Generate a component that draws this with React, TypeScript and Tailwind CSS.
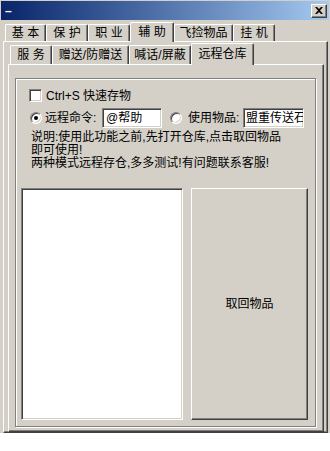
import clsx from "clsx";

const font = "font-['Liberation_Sans','Noto_Sans_CJK_SC',sans-serif]";

const raised =
  "border border-t-white border-l-white border-r-[#404040] border-b-[#404040] shadow-[inset_-1px_-1px_0_#808080]";
const sunken =
  "border border-t-[#808080] border-l-[#808080] border-r-white border-b-white shadow-[inset_1px_1px_0_#404040,inset_-1px_-1px_0_#d4d0c8]";

type TabDef = { label: string; w: string; active?: boolean };

const mainTabs: TabDef[] = [
  { label: "基 本", w: "w-[41px]" },
  { label: "保 护", w: "w-[42px]" },
  { label: "职 业", w: "w-[42px]" },
  { label: "辅 助", w: "w-[44px]", active: true },
  { label: "飞捡物品", w: "w-[59px]" },
  { label: "挂 机", w: "w-[42px]" },
];

const subTabs: TabDef[] = [
  { label: "服 务", w: "w-[42px]" },
  { label: "赠送/防赠送", w: "w-[77px]" },
  { label: "喊话/屏蔽", w: "w-[62px]" },
  { label: "远程仓库", w: "w-[63px]", active: true },
];

function Tab({ tab, h, hActive }: { tab: TabDef; h: string; hActive: string }) {
  return (
    <div
      className={clsx(
        "relative flex items-center justify-center bg-[#d4d0c8] border-t border-l border-r border-t-white border-l-white border-r-[#404040] rounded-t-[2px] shadow-[inset_-1px_0_0_#808080] text-[12px] leading-[12px] text-black whitespace-nowrap",
        tab.w,
        tab.active ? clsx("z-10 -mb-px pb-[2px]", hActive) : h
      )}
    >
      {tab.label}
    </div>
  );
}

function Radio({ checked }: { checked?: boolean }) {
  return (
    <div className="w-[12px] h-[12px] rounded-full bg-white border border-t-[#808080] border-l-[#808080] border-r-white border-b-white shadow-[inset_1px_1px_0_#404040,inset_-1px_-1px_0_#d4d0c8] flex items-center justify-center shrink-0">
      {checked && <div className="w-[4px] h-[4px] rounded-full bg-black" />}
    </div>
  );
}

export default function App() {
  return (
    <div className={clsx("w-[330px] h-[451px] bg-white", font)}>
      <div className="w-[330px] h-[433px] bg-[#d4d0c8] pt-px pl-px pr-px flex flex-col">
        {/* Title bar */}
        <div className="h-[19px] flex items-center justify-between bg-gradient-to-r from-[#0a246a] to-[#a6caf0] pl-[4px] pr-[2px]">
          <span className="text-white text-[12px] font-bold leading-none">–</span>
          <div className={clsx("w-[16px] h-[14px] bg-[#d4d0c8] flex items-center justify-center", raised)}>
            <svg width="8" height="7" viewBox="0 0 8 7">
              <path d="M0 0h2l2 2 2-2h2L5 3.5 8 7H6L4 5 2 7H0l3-3.5z" fill="#000" />
            </svg>
          </div>
        </div>

        {/* Main tab control */}
        <div className="mt-[2px] ml-[2px] w-[325px] flex-1 flex flex-col">
          <div className="h-[19px] flex items-end pl-[2px]">
            {mainTabs.map((t) => (
              <Tab key={t.label} tab={t} h="h-[17px]" hActive="h-[20px]" />
            ))}
          </div>
          <div className="flex-1 flex flex-col border border-t-white border-l-white border-r-[#404040] border-b-[#404040] shadow-[inset_-1px_-1px_0_#808080] pt-px pl-[4px]">
            {/* Sub tab control */}
            <div className="w-[316px] flex-1 flex flex-col">
              <div className="h-[21px] flex items-end pl-[2px]">
                {subTabs.map((t) => (
                  <Tab key={t.label} tab={t} h="h-[19px]" hActive="h-[22px]" />
                ))}
              </div>
              <div className="flex-1 border border-t-white border-l-white border-r-[#404040] border-b-[#404040] shadow-[inset_-1px_-1px_0_#808080] pt-[13px] pl-[6px]">
                {/* Group box */}
                <div className="w-[301px] h-[349px] border border-[#808080] shadow-[1px_1px_0_#fff,inset_1px_1px_0_#fff] pl-[13px] pt-[10px] text-[12px] leading-[12px] text-black flex flex-col">
                  <div className="flex items-center gap-[3px] h-[13px]">
                    <div className={clsx("w-[13px] h-[13px] bg-white shrink-0", sunken)} />
                    <span className="ml-px">Ctrl+S 快速存物</span>
                  </div>

                  <div className="mt-[6px] flex items-center h-[20px]">
                    <div className="ml-px">
                      <Radio checked />
                    </div>
                    <span className="ml-[3px] w-[57px]">远程命令:</span>
                    <div className={clsx("w-[60px] h-[20px] bg-white flex items-center pl-[3px] overflow-hidden", sunken)}>
                      @帮助
                    </div>
                    <div className="ml-[8px]">
                      <Radio />
                    </div>
                    <span className="ml-[6px] w-[55px]">使用物品:</span>
                    <div className={clsx("w-[61px] h-[20px] bg-white flex items-center pl-[2px] overflow-hidden whitespace-nowrap", sunken)}>
                      盟重传送石
                    </div>
                  </div>

                  <div className="mt-[3px] ml-[2px] flex flex-col leading-[13px]">
                    <div>说明:使用此功能之前,先打开仓库,点击取回物品</div>
                    <div>即可使用!</div>
                    <div>两种模式远程存仓,多多测试!有问题联系客服!</div>
                  </div>

                  <div className="mt-[18px] -ml-[8px] flex gap-[8px]">
                    <div className={clsx("w-[162px] h-[232px] bg-white", sunken)} />
                    <div className={clsx("w-[117px] h-[232px] bg-[#d4d0c8] flex items-center justify-center", raised)}>
                      取回物品
                    </div>
                  </div>
                </div>
              </div>
            </div>
          </div>
        </div>
      </div>
    </div>
  );
}
